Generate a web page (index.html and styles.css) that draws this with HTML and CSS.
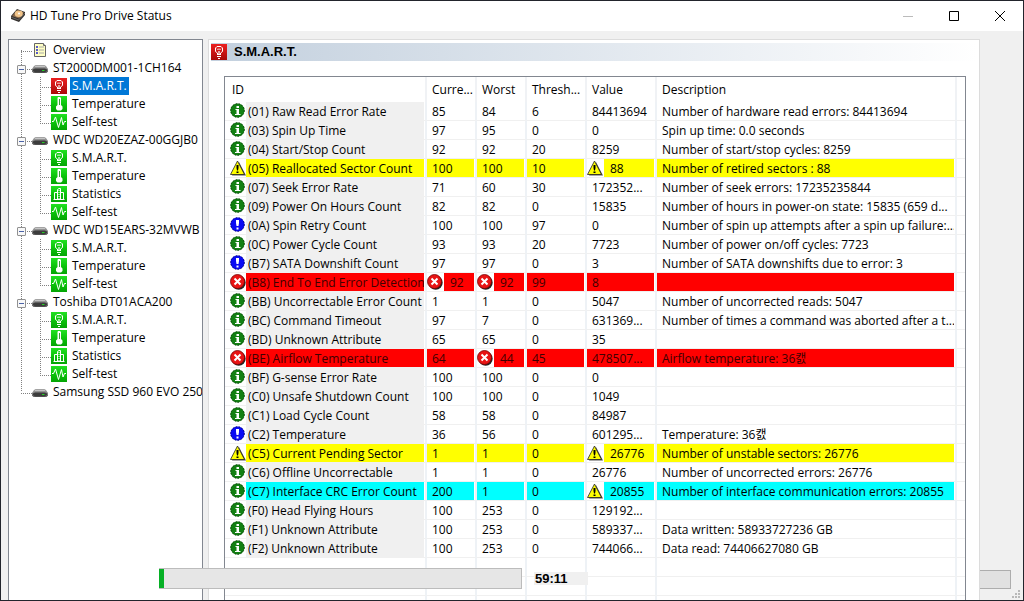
FILE: index.html
```html
<!DOCTYPE html>
<html lang="en">
<head>
<meta charset="utf-8">
<title>HD Tune Pro Drive Status</title>
<link rel="stylesheet" href="styles.css">
</head>
<body>
<svg class="sprite" aria-hidden="true">
  <defs>
    <linearGradient id="green" x1="0" y1="0" x2="0" y2="1"><stop offset="0" stop-color="#22e022"/><stop offset=".5" stop-color="#0cc40c"/><stop offset="1" stop-color="#04a404"/></linearGradient>
    <linearGradient id="redg" x1="0" y1="0" x2="0" y2="1"><stop offset="0" stop-color="#ec2020"/><stop offset="1" stop-color="#a80808"/></linearGradient>
    <linearGradient id="metal" x1="0" y1="0" x2="0" y2="1"><stop offset="0" stop-color="#a8a8a8"/><stop offset="1" stop-color="#606060"/></linearGradient>
  </defs>
  <symbol id="bulb" viewBox="0 0 16 16"><path d="M6.500 10V9L4.500 7.500V4L6 2.500H10L11.500 4V7.500L9.500 9V10M6 10.500H10M6 12.500H10M7 14.500H9" fill="none" stroke="#fff"/><path d="M6 4.500L7 6L8 4.500L9 6L10 4.500M7.500 7V10M8.500 7V10" fill="none" stroke="#fff" stroke-width=".6"/></symbol>
  <symbol id="smart" viewBox="0 0 16 16"><path fill="url(#green)" d="M0 0H16V16H0Z"/><use href="#bulb"/></symbol>
  <symbol id="smart-red" viewBox="0 0 16 16"><path fill="url(#redg)" d="M0 0H16V16H0Z"/><use href="#bulb"/></symbol>
  <symbol id="temp" viewBox="0 0 16 16"><path fill="url(#green)" d="M0 0H16V16H0Z"/><path d="M7 1H9L10 2V9L11.500 10.500V13L10 14.500H6.500L5 13V10.500L6.500 9V2Z" fill="#fff"/><path d="M8.500 3V9" stroke="#3a9a3a" fill="none"/></symbol>
  <symbol id="stat" viewBox="0 0 16 16"><path fill="url(#green)" d="M0 0H16V16H0Z"/><path d="M3.500 13.500V6.500H6.500M6.500 13.500V3.500L8 2.500H9.500V13.500M9.500 6.500H12.500V13.500M2.500 13.500H13.500" fill="none" stroke="#fff"/><path d="M8 4V13" stroke="#fff" stroke-dasharray="1 1"/></symbol>
  <symbol id="test" viewBox="0 0 16 16"><path fill="url(#green)" d="M0 0H16V16H0Z"/><path d="M1 7.500H2.500L4.500 3L7.500 13.500L10.500 3.500L12 11L13.500 7.500H15" fill="none" stroke="#fff"/></symbol>
  <symbol id="drive" viewBox="0 0 16 10"><path d="M3.500 1H12.500L14 2L16 5V7.500L14.500 9H1.500L0 7.500V5L2 2Z" fill="url(#metal)"/><path d="M1 5.500L3 4.500H13L15 5.500V7L12.500 8.500H3.500L1 7Z" fill="#3c3c3c"/><path d="M3 2.500H13" stroke="#c4c4c4"/><path d="M10 6.500H12.500" stroke="#20d020"/></symbol>
  <symbol id="notes" viewBox="0 0 12 14"><path d="M.5 .5H9.500L11.500 2.500V13.500H.5Z" fill="#ffffc4" stroke="#666"/><path d="M9.500 .5V2.500H11.500" fill="#fff" stroke="#666"/><path d="M2 4H4M2 7H4M2 10H4" stroke="#22c" stroke-width="1.500"/><path d="M5 4H10M5 7H10M5 10H10" stroke="#aaa"/></symbol>
  <symbol id="info" viewBox="0 0 16 16"><circle cx="7.500" cy="7.500" r="7" fill="#128012"/><circle cx="7.500" cy="7.500" r="6.800" fill="none" stroke="#043c04" stroke-dasharray="1.500 1.500"/><path d="M6.500 3H9V5H6.500ZM5.500 6H9V11H10.500V12H5V11H6.500V7H5.500Z" fill="#fff"/></symbol>
  <symbol id="notice" viewBox="0 0 16 16"><circle cx="7.500" cy="7.500" r="7" fill="#0a0af4"/><circle cx="7.500" cy="7.500" r="6.800" fill="none" stroke="#006" stroke-dasharray="1.500 1.500"/><path d="M6 3H9V6L8.500 9H6.500L6 6ZM6.500 10.500H8.500V12.500H6.500Z" fill="#fff"/></symbol>
  <symbol id="fail" viewBox="0 0 16 16"><circle cx="8.700" cy="8.700" r="7" fill="#222"/><circle cx="7.500" cy="7.500" r="7" fill="#e81414" stroke="#700" stroke-width=".8"/><path d="M4.500 4.500L10.500 10.500M10.500 4.500L4.500 10.500" stroke="#fff" stroke-width="2"/></symbol>
  <symbol id="warn" viewBox="0 0 16 16"><path d="M9 2L16 15.500H2Z" fill="#555"/><path d="M7.500 1L14.500 14.500H.5Z" fill="#ff0" stroke="#222" stroke-width=".8"/><path d="M6.500 5H8.500V8L8 10.500H7L6.500 8ZM6.500 11.500H8.500V13H6.500Z" fill="#000"/></symbol>
</svg>

<div class="window">
  <header class="titlebar">
    <svg class="app-icon" viewBox="0 0 16 14"><path d="M1 7L7 0L15 3V6L9 13L1 10Z" fill="#33302e"/><path d="M2 7L7 1L14 3.500L9 9.500Z" fill="#8a6a4c"/><ellipse cx="8.800" cy="4.700" rx="4" ry="3.200" fill="#f0c48a"/><circle cx="9" cy="4.500" r="1" fill="#fff"/><path d="M1 8L8.500 11L15 4" fill="none" stroke="#888" stroke-width=".6"/></svg>
    <h1 class="title">HD Tune Pro Drive Status</h1>
    <button class="win-btn" aria-label="Minimize"><svg viewBox="0 0 12 12"><path d="M1 6.500H11" stroke="#bbb"/></svg></button>
    <button class="win-btn" aria-label="Maximize"><svg viewBox="0 0 12 12"><path d="M1.500 1.500H10.500V10.500H1.500Z" fill="none" stroke="#000"/></svg></button>
    <button class="win-btn" aria-label="Close"><svg viewBox="0 0 12 12"><path d="M1 1L11 11M11 1L1 11" stroke="#000"/></svg></button>
  </header>

  <div class="body">
    <nav class="tree">
      <ul class="root">
        <li><div class="row top"><svg class="notes"><use href="#notes"/></svg><span>Overview</span></div></li>
        <li><div class="row top"><button class="toggle" aria-label="Collapse"></button><svg class="drive"><use href="#drive"/></svg><span>ST2000DM001-1CH164</span></div>
          <ul class="branch">
            <li class="row"><svg class="ico"><use href="#smart-red"/></svg><span class="selected">S.M.A.R.T.</span></li>
            <li class="row"><svg class="ico"><use href="#temp"/></svg><span>Temperature</span></li>
            <li class="row"><svg class="ico"><use href="#test"/></svg><span>Self-test</span></li>
          </ul></li>
        <li><div class="row top"><button class="toggle" aria-label="Collapse"></button><svg class="drive"><use href="#drive"/></svg><span>WDC WD20EZAZ-00GGJB0</span></div>
          <ul class="branch">
            <li class="row"><svg class="ico"><use href="#smart"/></svg><span>S.M.A.R.T.</span></li>
            <li class="row"><svg class="ico"><use href="#temp"/></svg><span>Temperature</span></li>
            <li class="row"><svg class="ico"><use href="#stat"/></svg><span>Statistics</span></li>
            <li class="row"><svg class="ico"><use href="#test"/></svg><span>Self-test</span></li>
          </ul></li>
        <li><div class="row top"><button class="toggle" aria-label="Collapse"></button><svg class="drive"><use href="#drive"/></svg><span>WDC WD15EARS-32MVWB</span></div>
          <ul class="branch">
            <li class="row"><svg class="ico"><use href="#smart"/></svg><span>S.M.A.R.T.</span></li>
            <li class="row"><svg class="ico"><use href="#temp"/></svg><span>Temperature</span></li>
            <li class="row"><svg class="ico"><use href="#test"/></svg><span>Self-test</span></li>
          </ul></li>
        <li><div class="row top"><button class="toggle" aria-label="Collapse"></button><svg class="drive"><use href="#drive"/></svg><span>Toshiba DT01ACA200</span></div>
          <ul class="branch">
            <li class="row"><svg class="ico"><use href="#smart"/></svg><span>S.M.A.R.T.</span></li>
            <li class="row"><svg class="ico"><use href="#temp"/></svg><span>Temperature</span></li>
            <li class="row"><svg class="ico"><use href="#stat"/></svg><span>Statistics</span></li>
            <li class="row"><svg class="ico"><use href="#test"/></svg><span>Self-test</span></li>
          </ul></li>
        <li><div class="row top"><svg class="drive"><use href="#drive"/></svg><span>Samsung SSD 960 EVO 250</span></div></li>
      </ul>
    </nav>

    <main class="panel">
      <h2 class="section"><svg class="section-icon"><use href="#smart-red"/></svg><span>S.M.A.R.T.</span></h2>
      <div class="list">
        <table>
          <colgroup><col class="c-id"><col class="c-num"><col class="c-num"><col class="c-thr"><col class="c-val"><col class="c-desc"><col></colgroup>
          <thead><tr><th>ID</th><th>Curre...</th><th>Worst</th><th>Thresh...</th><th>Value</th><th>Description</th><th></th></tr></thead>
          <tbody>
            <tr><td><svg><use href="#info"/></svg><p>(01) Raw Read Error Rate</p></td><td><p>85</p></td><td><p>84</p></td><td><p>6</p></td><td><p>84413694</p></td><td><p>Number of hardware read errors: 84413694</p></td><td></td></tr>
            <tr><td><svg><use href="#info"/></svg><p>(03) Spin Up Time</p></td><td><p>97</p></td><td><p>95</p></td><td><p>0</p></td><td><p>0</p></td><td><p>Spin up time: 0.0 seconds</p></td><td></td></tr>
            <tr><td><svg><use href="#info"/></svg><p>(04) Start/Stop Count</p></td><td><p>92</p></td><td><p>92</p></td><td><p>20</p></td><td><p>8259</p></td><td><p>Number of start/stop cycles: 8259</p></td><td></td></tr>
            <tr class="yellow"><td><svg><use href="#warn"/></svg><p>(05) Reallocated Sector Count</p></td><td><p>100</p></td><td><p>100</p></td><td><p>10</p></td><td class="flag"><svg><use href="#warn"/></svg><p>88</p></td><td><p>Number of retired sectors : 88</p></td><td></td></tr>
            <tr><td><svg><use href="#info"/></svg><p>(07) Seek Error Rate</p></td><td><p>71</p></td><td><p>60</p></td><td><p>30</p></td><td><p>172352...</p></td><td><p>Number of seek errors: 17235235844</p></td><td></td></tr>
            <tr><td><svg><use href="#info"/></svg><p>(09) Power On Hours Count</p></td><td><p>82</p></td><td><p>82</p></td><td><p>0</p></td><td><p>15835</p></td><td><p>Number of hours in power-on state: 15835 (659 d...</p></td><td></td></tr>
            <tr><td><svg><use href="#notice"/></svg><p>(0A) Spin Retry Count</p></td><td><p>100</p></td><td><p>100</p></td><td><p>97</p></td><td><p>0</p></td><td><p>Number of spin up attempts after a spin up failure:...</p></td><td></td></tr>
            <tr><td><svg><use href="#info"/></svg><p>(0C) Power Cycle Count</p></td><td><p>93</p></td><td><p>93</p></td><td><p>20</p></td><td><p>7723</p></td><td><p>Number of power on/off cycles: 7723</p></td><td></td></tr>
            <tr><td><svg><use href="#notice"/></svg><p>(B7) SATA Downshift Count</p></td><td><p>97</p></td><td><p>97</p></td><td><p>0</p></td><td><p>3</p></td><td><p>Number of SATA downshifts due to error: 3</p></td><td></td></tr>
            <tr class="red"><td><svg><use href="#fail"/></svg><p>(B8) End To End Error Detection</p></td><td class="flag"><svg><use href="#fail"/></svg><p>92</p></td><td class="flag"><svg><use href="#fail"/></svg><p>92</p></td><td><p>99</p></td><td><p>8</p></td><td><p></p></td><td></td></tr>
            <tr><td><svg><use href="#info"/></svg><p>(BB) Uncorrectable Error Count</p></td><td><p>1</p></td><td><p>1</p></td><td><p>0</p></td><td><p>5047</p></td><td><p>Number of uncorrected reads: 5047</p></td><td></td></tr>
            <tr><td><svg><use href="#info"/></svg><p>(BC) Command Timeout</p></td><td><p>97</p></td><td><p>7</p></td><td><p>0</p></td><td><p>631369...</p></td><td><p>Number of times a command was aborted after a t...</p></td><td></td></tr>
            <tr><td><svg><use href="#info"/></svg><p>(BD) Unknown Attribute</p></td><td><p>65</p></td><td><p>65</p></td><td><p>0</p></td><td><p>35</p></td><td><p></p></td><td></td></tr>
            <tr class="red"><td><svg><use href="#fail"/></svg><p>(BE) Airflow Temperature</p></td><td><p>64</p></td><td class="flag"><svg><use href="#fail"/></svg><p>44</p></td><td><p>45</p></td><td><p>478507...</p></td><td><p>Airflow temperature: 36캜</p></td><td></td></tr>
            <tr><td><svg><use href="#info"/></svg><p>(BF) G-sense Error Rate</p></td><td><p>100</p></td><td><p>100</p></td><td><p>0</p></td><td><p>0</p></td><td><p></p></td><td></td></tr>
            <tr><td><svg><use href="#info"/></svg><p>(C0) Unsafe Shutdown Count</p></td><td><p>100</p></td><td><p>100</p></td><td><p>0</p></td><td><p>1049</p></td><td><p></p></td><td></td></tr>
            <tr><td><svg><use href="#info"/></svg><p>(C1) Load Cycle Count</p></td><td><p>58</p></td><td><p>58</p></td><td><p>0</p></td><td><p>84987</p></td><td><p></p></td><td></td></tr>
            <tr><td><svg><use href="#notice"/></svg><p>(C2) Temperature</p></td><td><p>36</p></td><td><p>56</p></td><td><p>0</p></td><td><p>601295...</p></td><td><p>Temperature: 36캜</p></td><td></td></tr>
            <tr class="yellow"><td><svg><use href="#warn"/></svg><p>(C5) Current Pending Sector</p></td><td><p>1</p></td><td><p>1</p></td><td><p>0</p></td><td class="flag"><svg><use href="#warn"/></svg><p>26776</p></td><td><p>Number of unstable sectors: 26776</p></td><td></td></tr>
            <tr><td><svg><use href="#info"/></svg><p>(C6) Offline Uncorrectable</p></td><td><p>1</p></td><td><p>1</p></td><td><p>0</p></td><td><p>26776</p></td><td><p>Number of uncorrected errors: 26776</p></td><td></td></tr>
            <tr class="cyan"><td><svg><use href="#info"/></svg><p>(C7) Interface CRC Error Count</p></td><td><p>200</p></td><td><p>1</p></td><td><p>0</p></td><td class="flag"><svg><use href="#warn"/></svg><p>20855</p></td><td><p>Number of interface communication errors: 20855</p></td><td></td></tr>
            <tr><td><svg><use href="#info"/></svg><p>(F0) Head Flying Hours</p></td><td><p>100</p></td><td><p>253</p></td><td><p>0</p></td><td><p>129192...</p></td><td><p></p></td><td></td></tr>
            <tr><td><svg><use href="#info"/></svg><p>(F1) Unknown Attribute</p></td><td><p>100</p></td><td><p>253</p></td><td><p>0</p></td><td><p>589337...</p></td><td><p>Data written: 58933727236 GB</p></td><td></td></tr>
            <tr><td><svg><use href="#info"/></svg><p>(F2) Unknown Attribute</p></td><td><p>100</p></td><td><p>253</p></td><td><p>0</p></td><td><p>744066...</p></td><td><p>Data read: 74406627080 GB</p></td><td></td></tr>
            <tr class="blank"><td></td><td></td><td></td><td></td><td></td><td></td><td></td></tr>
            <tr class="blank"><td></td><td></td><td></td><td></td><td></td><td></td><td></td></tr>
            <tr class="blank"><td></td><td></td><td></td><td></td><td></td><td></td><td></td></tr>
          </tbody>
        </table>
      </div>
    </main>
    <aside class="edge"><button class="side-btn" aria-label="Action"></button></aside>
  </div>

  <div class="status">
    <progress value="5" max="361" aria-label="Progress"></progress>
    <output>59:11</output>
  </div>
  <svg class="grip" viewBox="0 0 9 9"><path d="M6 0H8V2H6ZM3 3H5V5H3ZM6 3H8V5H6ZM0 6H2V8H0ZM3 6H5V8H3ZM6 6H8V8H6Z" fill="#b8b8b8"/></svg>
</div>
</body>
</html>
```

FILE: styles.css
```css
* { box-sizing: border-box; }
body {
  margin: 0;
  font: 12px/18px "Open Sans", "Noto Sans CJK KR", sans-serif;
  color: #000;
}
.sprite { position: absolute; width: 0; height: 0; }
svg { display: block; flex: none; }
button { margin: 0; padding: 0; border: 0; background: none; }
ul { margin: 0; padding: 0; list-style: none; }

.window {
  position: relative;
  display: flex;
  flex-direction: column;
  height: 100vh;
  overflow: hidden;
  border: 1px solid #22242c;
  background: #f0f0f0;
}
.titlebar {
  display: flex;
  align-items: center;
  flex: none;
  height: 30px;
  padding-left: 9px;
  background: #fff;
}
.app-icon { width: 16px; height: 14px; }
.title { flex: 1; margin: 0 0 0 4px; font-size: 12px; font-weight: 400; }
.win-btn { display: grid; place-items: center; width: 46px; height: 30px; }
.win-btn svg { width: 12px; height: 12px; }

.body { display: flex; flex: 1; min-height: 0; padding: 8px 0 0 7px; }

.tree {
  flex: none;
  width: 195px;
  border: 1px solid #828790;
  border-bottom: 0;
  background: #fff;
  overflow: hidden;
  white-space: nowrap;
}
.root {
  margin-top: 1px;
  background: repeating-linear-gradient(to bottom, #808080 0 1px, transparent 1px 2px) no-repeat 12px 9px / 1px calc(100% - 18px);
}
.branch {
  background: repeating-linear-gradient(to bottom, #808080 0 1px, transparent 1px 2px) no-repeat 31px 0 / 1px calc(100% - 8px);
}
.row {
  display: flex;
  align-items: center;
  height: 18px;
  padding-left: 42px;
  background: repeating-linear-gradient(to right, #808080 0 1px, transparent 1px 2px) no-repeat 31px 10px / 11px 1px;
}
.row.top { padding-left: 23px; background-position: 12px 10px; }
.row span { padding: 0 2px; }
.ico { width: 16px; height: 16px; margin-right: 3px; }
.notes { width: 12px; height: 14px; margin: 0 5px 0 2px; }
.drive { width: 16px; height: 10px; margin: 2px 3px 0 0; }
.toggle {
  flex: none;
  width: 9px;
  height: 9px;
  margin: 3px 6px 0 -15px;
  border: 1px solid #919191;
  border-radius: 1px;
  background: linear-gradient(#4b63a7, #4b63a7) center / 5px 1px no-repeat, #f8f8f8;
}
.selected { background: #0078d7; color: #fff; }

.panel {
  display: flex;
  flex-direction: column;
  flex: 1;
  min-width: 0;
  margin-left: 5px;
  border: 1px solid #dcdcdc;
  border-bottom: 0;
  background: #fff;
}
.section {
  display: flex;
  align-items: center;
  flex: none;
  gap: 7px;
  height: 18px;
  margin: 3px 2px 0;
  background: linear-gradient(to right, #c3d0de, #fff);
  font: bold 13px/18px "Liberation Sans", Arial, sans-serif;
}
.section-icon { width: 16px; height: 16px; }
.list {
  flex: 1;
  min-height: 0;
  margin: 15px 13px 0 15px;
  overflow: hidden;
  border: 1px solid #828790;
  border-bottom: 0;
}
table { width: 100%; table-layout: fixed; border-spacing: 0; }
.c-id { width: 202px; }
.c-num { width: 50px; }
.c-thr { width: 60px; }
.c-val { width: 70px; }
.c-desc { width: 300px; }
th {
  height: 25px;
  padding: 0 0 0 5px;
  border-right: 2px solid #f0f2f5;
  font-weight: 400;
  text-align: left;
  white-space: nowrap;
}
th:first-child { padding-left: 7px; }
td {
  height: 19px;
  padding: 0 1px 0 0;
  border-right: 2px solid #eef2f6;
  border-bottom: 1px solid #f0f0f0;
}
th:last-child, td:last-child { border-right: 0; }
td svg { float: left; width: 16px; height: 16px; margin-top: 1px; }
td p {
  height: 18px;
  margin: 0;
  padding-left: 5px;
  overflow: hidden;
  line-height: 19px;
  white-space: nowrap;
}
td:first-child svg { margin-left: 5px; }
td:first-child p { padding-left: 2px; background: #f0f0f0; }
.flag p { padding-left: 6px; }
.flag svg { margin-right: 1px; }
tr.yellow p { background: #ff0; }
tr.red p { background: #f00; color: #400000; }
tr.cyan p { background: #0ff; }

.edge {
  display: flex;
  align-items: flex-end;
  flex: none;
  width: 43px;
  padding-bottom: 11px;
}
.side-btn {
  width: 31px;
  height: 19px;
  border: 1px solid #adadad;
  border-left: 0;
  background: #e1e1e1;
}
.status {
  position: absolute;
  bottom: 11px;
  left: 158px;
  display: flex;
  align-items: center;
  gap: 12px;
}
progress {
  appearance: none;
  width: 363px;
  height: 21px;
  border: 1px solid #bcbcbc;
  border-left: 0;
  background: #e6e6e6;
}
progress::-webkit-progress-bar { background: #e6e6e6; }
progress::-webkit-progress-value { background: #06b025; }
output {
  width: 54px;
  height: 13px;
  padding-left: 1px;
  background: #f0f0f0;
  font: bold 13px/13px "Liberation Sans", Arial, sans-serif;
}
.grip { position: absolute; right: 2px; bottom: 1px; width: 9px; height: 9px; }
```
